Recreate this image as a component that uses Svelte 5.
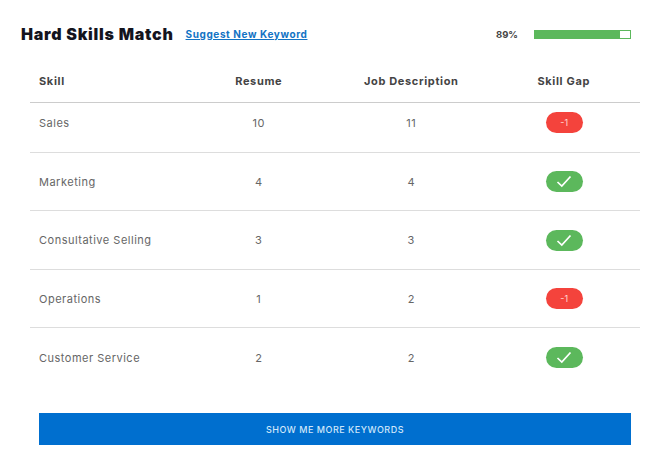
<script>
  const rows = [
    { skill: 'Sales', resume: 10, job: 11, ok: false, h: 50 },
    { skill: 'Marketing', resume: 4, job: 4, ok: true, h: 58 },
    { skill: 'Consultative Selling', resume: 3, job: 3, ok: true, h: 59 },
    { skill: 'Operations', resume: 1, job: 2, ok: false, h: 58 },
    { skill: 'Customer Service', resume: 2, job: 2, ok: true, h: 59 }
  ];
</script>

<div class="page">
  <header class="top">
    <div class="title">
      <h2>Hard Skills Match</h2>
      <a href="#top">Suggest New Keyword</a>
    </div>
    <div class="score">
      <span>89%</span>
      <div class="bar"><div class="fill"></div></div>
    </div>
  </header>

  <div class="table">
    <div class="row head">
      <div class="c first">Skill</div>
      <div class="c">Resume</div>
      <div class="c">Job Description</div>
      <div class="c">Skill Gap</div>
    </div>
    {#each rows as r}
      <div class="row body" style="height: {r.h}px">
        <div class="c first">{r.skill}</div>
        <div class="c">{r.resume}</div>
        <div class="c">{r.job}</div>
        <div class="c">
          {#if r.ok}
            <span class="pill ok">
              <svg width="16" height="13" viewBox="0 0 16 13" fill="none"><path d="M1.5 7 L5.8 11 L14.5 1.5" stroke="#fff" stroke-width="1.7"/></svg>
            </span>
          {:else}
            <span class="pill bad">-1</span>
          {/if}
        </div>
      </div>
    {/each}
  </div>

  <button class="more">SHOW ME MORE KEYWORDS</button>
</div>

<style>
  :global(body) { margin: 0; background: #fff; }
  .page {
    width: 655px; height: 467px; box-sizing: border-box; overflow: hidden;
    padding-top: 24px;
    font-family: Inter, "Noto Sans", sans-serif; color: #555;
  }
  .top { display: flex; justify-content: space-between; align-items: center; height: 21px; padding: 0 24px 0 21px; }
  .title { display: flex; align-items: center; gap: 12px; margin-top: -1px; }
  h2 { margin: 0; font-size: 16px; font-weight: 900; color: #14141e; letter-spacing: 0.75px; }
  a { font-size: 10px; font-weight: 700; color: #1273c4; letter-spacing: 0.6px; }
  .score { display: flex; align-items: center; gap: 16px; font-size: 9.5px; font-weight: 700; color: #444; }
  .bar { width: 97px; height: 9px; box-sizing: border-box; border: 1px solid #5cb85c; background: #fff; }
  .fill { width: 89%; height: 100%; background: #5cb85c; }
  .table { margin: 15px 15px 0 30px; }
  .row { display: grid; grid-template-columns: repeat(4, 1fr); align-items: center; text-align: center; box-sizing: border-box; }
  .row.head { height: 43px; border-bottom: 1px solid #ccc; font-size: 11px; font-weight: 700; color: #444; letter-spacing: 0.65px; }
  .row.body { font-size: 11px; color: #666; border-bottom: 1px solid #ddd; letter-spacing: 0.5px; }
  .row.head + .row.body { padding-bottom: 10px; }
  .row.body:last-child { border-bottom: none; }
  .first { text-align: left; padding-left: 9px; }
  .pill { display: inline-flex; align-items: center; justify-content: center; width: 37px; height: 21px; margin-left: 1px; border-radius: 11px; color: #ffd9d6; font-size: 9px; letter-spacing: 0; vertical-align: middle; }
  .ok { background: #5cb85c; }
  .bad { background: #f4433c; }
  .more {
    display: block; width: 592px; height: 32px; margin: 26px 0 0 39px; border: 0; padding: 0;
    background: #006fcf; color: #cfe6fa; font: 500 9px Inter, "Noto Sans", sans-serif; letter-spacing: 0.5px;
  }
</style>
